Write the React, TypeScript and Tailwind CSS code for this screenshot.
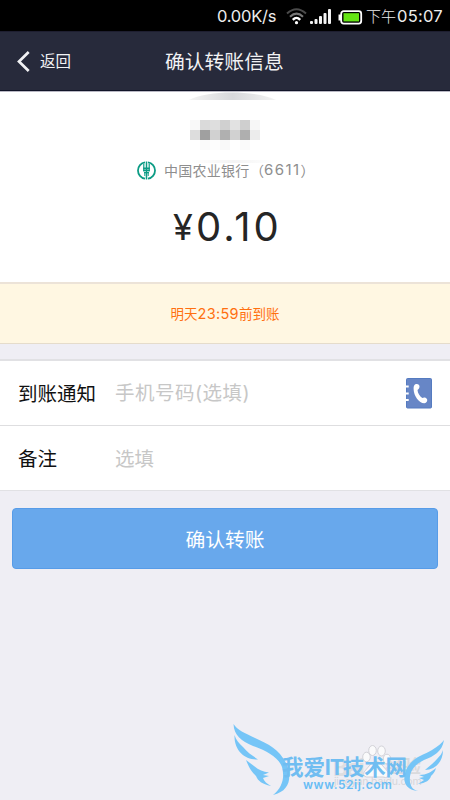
import React from 'react';

const mosaic = [
  'bg-[#f9f9f9]', 'bg-[#dadada]', 'bg-[#dedede]', 'bg-[#d0d0d0]', 'bg-[#e2e2e2]', 'bg-[#cfcfcf]', 'bg-[#f7f7f7]',
  'bg-[#dddddd]', 'bg-[#a0a0a0]', 'bg-[#d1d1d1]', 'bg-[#b0b0b0]', 'bg-[#d1d1d1]', 'bg-[#afafaf]', 'bg-[#ececec]',
  'bg-white', 'bg-[#fafafa]', 'bg-[#fdfdfd]', 'bg-[#f9f9f9]', 'bg-white', 'bg-[#fafafa]', 'bg-white',
];

function StatusBar() {
  return (
    <div className="flex h-[31px] items-center bg-black pl-[217px] text-[#ededed]">
      <span className="w-[60px] pt-px text-[16.5px] leading-[31px] tracking-[-0.25px]">0.00K/s</span>
      <svg className="ml-[9px] mt-px h-[18px] w-[21px] shrink-0" viewBox="0 0 21 18" fill="none" strokeWidth="2">
        <path d="M1 6.5Q10.5-2 20 6.5" stroke="#4b4b4b" />
        <path d="M4 9.7Q10.5 3.5 17 9.7" stroke="#777" />
        <path d="M6.8 12.8Q10.5 9 14.2 12.8" stroke="#fff" strokeWidth="2.4" />
        <circle cx="10.5" cy="15.7" r="1.6" fill="#fff" />
      </svg>
      <svg className="ml-[3px] mt-px h-[16px] w-[22px] shrink-0" viewBox="0 0 22 16" fill="#f4f4f4">
        <rect x="0" y="13" width="3" height="3" rx="1" />
        <rect x="4.5" y="11" width="3" height="5" rx="1" />
        <rect x="9" y="8" width="3" height="8" rx="1" />
        <rect x="13.5" y="5" width="3" height="11" rx="1" />
        <rect x="18" y="1" width="3" height="15" rx="1" />
      </svg>
      <svg className="ml-[6px] mt-[3px] h-[15px] w-[25px] shrink-0" viewBox="0 0 25 15">
        <path d="M2 4.500v6" stroke="#fff" strokeWidth="3" />
        <rect x="3.2" y="1.2" width="20" height="12.4" rx="2.5" stroke="#fff" strokeWidth="1.8" fill="#000" />
        <rect x="5.5" y="3.2" width="15.5" height="8.2" fill="#64e414" />
      </svg>
      <span className="ml-[3px] whitespace-nowrap pt-px text-[15px] font-light leading-[31px]">下午</span>
      <span className="ml-px pt-px text-[16.5px] tracking-[0.25px]">05:07</span>
    </div>
  );
}

function BankLogo() {
  return (
    <svg className="h-[19px] w-[19px] shrink-0" viewBox="0 0 19 19" fill="none" stroke="#0d9c85">
      <path d="M8 1.300A8.300 8.300 0 0 0 8 17.700M11 1.300A8.300 8.300 0 0 1 11 17.700" strokeWidth="1.8" />
      <path d="M9.500 .5v18" strokeWidth="1.5" />
      <path d="M6.800 3v7.500M12.200 3v7.500" strokeWidth="1.2" />
      <path d="M6.200 7.200h6.600M6.200 9.300h6.600M7 11.600h5" strokeWidth="1.5" />
      <path d="M7.800 12v3M11.200 12v3" strokeWidth="1" />
    </svg>
  );
}

function PhoneBook() {
  return (
    <svg className="h-[31px] w-[26px]" viewBox="0 0 26 31">
      <rect x=".5" y=".5" width="25" height="29.5" rx="1" fill="#6786c6" stroke="#557bc0" />
      <path d="M0 8.5h2.7M0 15.5h2.7M0 22h2.7" stroke="#fff" strokeWidth="2" />
      <path d="M9.3 6.2c2.4-.8 4.2.2 4.2 2.4 0 1.6-.7 2.7-2 3.5.3 3.4 2.2 6.2 4.8 8 1.8-1.1 3.8-.6 4.8 1.2.6 1.7-.6 3.5-2.6 4-5.2.3-10.8-7.2-10.9-14.3C7.500 8.500 8 7 9.300 6.200Z" fill="#fff" />
    </svg>
  );
}

function Watermark() {
  return (
    <div className="absolute left-[225px] top-[715px] h-[85px] w-[225px] overflow-hidden whitespace-nowrap">
      <div className="absolute left-[108px] top-[41px] text-[23px] font-bold leading-[24px] tracking-[-1.5px] text-[#dedee1]">Bai</div>
      <div className="absolute left-[160px] top-[40px] text-[18.5px] font-bold leading-[22px] tracking-[-1px] text-[#dadadd]">经验</div>
      <div className="absolute left-[109px] top-[59px] text-[10.5px] leading-[16px] tracking-[-0.2px] text-[#d6d6da]">jingyan.baidu.com</div>
      <svg className="absolute inset-0 h-full w-full" viewBox="0 0 225 85">
        <g fill="#fafafb" stroke="#d2d2d8" strokeWidth="1">
          <ellipse cx="141.500" cy="42" rx="3.800" ry="4.800" />
          <ellipse cx="147.500" cy="35.500" rx="3.800" ry="5" />
          <ellipse cx="156.500" cy="36" rx="3.800" ry="5" />
          <ellipse cx="162" cy="44" rx="3.800" ry="4.800" />
          <path d="M145 50q6-7 12 0l7 8q0 6-6 4h-13q-8 1-6-5Z" />
        </g>
        <g fill="#75c5f7">
          <path d="M8.500 9C9 20 16 26 28 31C42 36 54 43 57 52C60 63 57 73 48 80C66 76 67 61 61 48C54 34 43 29 30 23C20 18 12 15 8.500 9Z" />
          <path d="M9.500 20C9 36 20 45 33 44.500C28 41 23 38 18 32C14 28 11 25 9.500 20Z" />
          <path d="M21 45L29 51C34 55 38 57 44 57.500L38 60L44 61L38 63C39 66 42 69 46 71C37 69 33 66 31 61C27 57 24 53 21 45Z" />
          <path d="M219 25C217 37 209 41 199 45C188 50 184 58 185 67C186 73 189 75 193 76C180 75 176 65 182 53C188 42 199 40 207 35C213 31 217 28 219 25Z" />
          <path d="M218 35C218 48 209 55 200 55C204 51 209 48 212 44C216 40 217 38 218 35Z" />
          <path d="M211 53C206 57 202 60 194 60L199 62L194 63L199 65L193 69C201 68 205 65 206 61C208 59 210 57 211 53Z" />
        </g>
      </svg>
      <div className="absolute left-[57px] top-[40px] flex text-[21.5px] font-bold leading-[25px] tracking-[-0.1px] text-[#70bdf1]">
        <span>我爱</span><span className="w-[18px] tracking-[-1px]">IT</span><span>技术网</span>
      </div>
      <div className="absolute left-[78px] top-[62px] text-[12px] font-semibold leading-[16px] tracking-[0.5px] text-[#68bdf5]">www.52ij.com</div>
    </div>
  );
}

export default function App() {
  return (
    <main className="relative h-[800px] w-[450px] overflow-hidden bg-[#efeef4] font-['Inter','Noto_Sans_CJK_SC',sans-serif]">
      <StatusBar />
      <header className="flex h-[60px] items-center border-b border-t border-b-[#111428] border-t-[#1e1e30] bg-[#272a3b] text-[#f2f2f4]">
        <svg className="ml-[17px] h-[21px] w-[13px]" viewBox="0 0 13 21" fill="none" stroke="currentColor" strokeWidth="2.7">
          <path d="M11.700 1L2 10.500L11.700 20" />
        </svg>
        <span className="ml-[10px] w-[40px] pt-[2px] text-[15.5px] leading-5">返回</span>
        <h1 className="ml-[85px] pt-[2px] text-[19.8px] font-normal leading-7">确认转账信息</h1>
      </header>
      <section className="h-[191px] bg-white">
        <svg className="block h-[29px] w-full" viewBox="0 0 450 29">
          <defs><linearGradient id="avatarShade"><stop stopColor="#f4f4f4" /><stop offset=".5" stopColor="#d7d8db" /><stop offset="1" stopColor="#f3f3f3" /></linearGradient></defs>
          <path d="M189 9C207-1 255-1 276 9Z" fill="url(#avatarShade)" />
          <path d="M0 .5h450" stroke="#b9b8c4" strokeWidth="1" />
        </svg>
        <div className="ml-[190px] grid w-[70px] grid-cols-7">
          {mosaic.map((shade, i) => <div key={i} className={'h-[10px] ' + shade} />)}
        </div>
        <div className="ml-[190px] mt-[10px] h-[3px] w-[88px] bg-linear-to-r from-white via-[#f4f4f4] to-white" />
        <div className="-mt-[4px] ml-[137px] flex h-[22px] items-center whitespace-nowrap text-[14px] text-[#8e8e8e]">
          <BankLogo />
          <span className="ml-[8px] w-[86px] tracking-[0.25px]">中国农业银行</span>
          <span>（</span><span className="text-[15px] tracking-[1.4px]">6611</span><span>）</span>
        </div>
        <div className="mt-[22px] flex pl-[173px] text-[40px] leading-[48px] text-[#252525]">
          <span className="w-[23px] text-[36px] tracking-tighter">¥</span><span className="tracking-[3px]">0.10</span>
        </div>
      </section>
      <div className="flex h-[62px] items-center justify-center border-b border-t-2 border-b-[#e5dccb] border-t-[#ece3d8] bg-[#fff7e2] text-[13.500px] text-[#ff7010]">
        <span className="whitespace-nowrap">明天<span className="text-[14.5px] tracking-[0.3px]">23:59</span>前到账</span>
      </div>
      <section className="mt-[15px] border-b border-t-2 border-[#e1e1e4] bg-white text-[19.5px]">
        <div className="flex h-[65px] items-center border-b border-[#dedee0]">
          <label className="ml-[18px] w-[97px] pt-[3px] text-[#111]">到账通知</label>
          <span className="w-[291px] pt-[2px] tracking-[0.5px] text-[#c7c7c7]">手机号码(选填)</span>
          <PhoneBook />
        </div>
        <div className="flex h-[64px] items-center">
          <label className="ml-[18px] w-[97px] pt-[3px] text-[#111]">备注</label>
          <span className="pt-[3px] text-[#c7c7c7]">选填</span>
        </div>
      </section>
      <button className="ml-[12px] mt-[17px] block h-[61px] w-[426px] rounded-[4px] border border-[#579ce8] bg-[#68a8ec] pt-[4px] text-[19.8px] text-white">确认转账</button>
      <Watermark />
    </main>
  );
}
